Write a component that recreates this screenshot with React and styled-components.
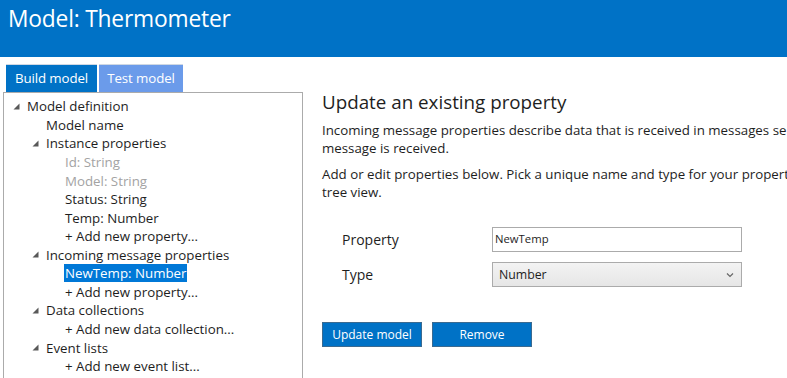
import React from "react";
import styled, { createGlobalStyle } from "styled-components";

const Global = createGlobalStyle`
  html, body { margin: 0; padding: 0; background: #fff; overflow: hidden; }
  body { font-family: "Open Sans", "Noto Sans", sans-serif; color: #1e1e1e; }
  * { box-sizing: border-box; }
`;

const Page = styled.div`
  width: 787px;
  height: 378px;
  overflow: hidden;
  display: flex;
  flex-direction: column;
`;

const Header = styled.header`
  height: 57px;
  background: #0072c6;
  padding: 3px 0 0 8px;
  flex: none;
`;

const Title = styled.h1`
  margin: 0;
  font-weight: 400;
  font-size: 22.8px;
  color: #fff;
  letter-spacing: -0.2px;
`;

const Body = styled.div`
  display: flex;
  flex: 1;
  padding: 7px 0 0 3px;
  min-height: 0;
`;

const LeftCol = styled.div`
  width: 300px;
  flex: none;
  display: flex;
  flex-direction: column;
`;

const Tabs = styled.div`
  display: flex;
  gap: 2px;
  padding-left: 3px;
`;

const Tab = styled.div`
  height: 28px;
  width: ${(p) => p.$w}px;
  padding: 0 0 1px 0;
  display: flex;
  align-items: center;
  justify-content: center;
  white-space: nowrap;
  border-top: 1px solid #cfd8e3;
  background: ${(p) => (p.$active ? "#0072c6" : "#6b9bea")};
  color: #fff;
  font-size: 13.3px;
  letter-spacing: -0.1px;
`;

const TreePanel = styled.div`
  flex: 1;
  border: 1px solid #ababab;
  border-bottom: none;
  padding-top: 4px;
`;

const Row = styled.div`
  height: 18.57px;
  display: flex;
  align-items: center;
  padding-left: ${(p) => 8 + p.$level * 19}px;
  font-size: 13.3px;
  color: ${(p) => (p.$muted ? "#a3a3a3" : "#1e1e1e")};
`;

const Toggle = styled.span`
  width: 15px;
  flex: none;
  display: flex;
  align-items: center;
  padding-left: 1px;
`;

const Label = styled.span`
  line-height: 18px;
  padding: 0 1px;
  margin-left: -1px;
  background: ${(p) => (p.$selected ? "#0078d7" : "transparent")};
  color: ${(p) => (p.$selected ? "#fff" : "inherit")};
  white-space: nowrap;
`;

const Right = styled.main`
  padding: 25px 0 0 19px;
  width: 620px;
  flex: none;
`;

const Heading = styled.h2`
  margin: 0;
  font-weight: 400;
  font-size: 18.8px;
  line-height: 26px;
`;

const Para = styled.p`
  margin: 7px 0 0;
  font-size: 13.3px;
  line-height: 17.5px;
  white-space: nowrap;
  & + & {
    margin-top: 9px;
  }
`;

const Form = styled.div`
  display: grid;
  grid-template-columns: 150px 250px;
  row-gap: 10px;
  margin: 26px 0 0 20px;
  align-items: center;
`;

const FieldLabel = styled.span`
  font-size: 14px;
`;

const Input = styled.div`
  height: 25px;
  border: 1px solid #ababab;
  font-size: 11.3px;
  padding: 3px 0 0 2px;
`;

const Select = styled.div`
  height: 25px;
  border: 1px solid #ababab;
  background: linear-gradient(#f3f3f3, #e6e6e6);
  font-size: 12.3px;
  display: flex;
  align-items: center;
  justify-content: space-between;
  padding: 0 7px 0 6px;
`;

const Buttons = styled.div`
  display: flex;
  gap: 10px;
  margin-top: 35px;
`;

const Button = styled.button`
  width: 100px;
  height: 25px;
  background: #0072c6;
  border: 1px solid #3b6a90;
  color: #fff;
  font-family: inherit;
  font-size: 12px;
  padding: 0;
`;

const Tri = () => (
  <svg width="7" height="7" viewBox="0 0 7 7">
    <polygon points="6.5,0.5 6.5,6.5 0.5,6.5" fill="#595959" />
  </svg>
);

const Chevron = () => (
  <svg width="8" height="6" viewBox="0 0 8 6">
    <polyline points="1,1.5 4,4.5 7,1.5" fill="none" stroke="#666" strokeWidth="1.2" />
  </svg>
);

const tree = [
  { t: "Model definition", l: 0, e: true },
  { t: "Model name", l: 1 },
  { t: "Instance properties", l: 1, e: true },
  { t: "Id: String", l: 2, m: true },
  { t: "Model: String", l: 2, m: true },
  { t: "Status: String", l: 2 },
  { t: "Temp: Number", l: 2 },
  { t: "+ Add new property...", l: 2 },
  { t: "Incoming message properties", l: 1, e: true },
  { t: "NewTemp: Number", l: 2, s: true },
  { t: "+ Add new property...", l: 2 },
  { t: "Data collections", l: 1, e: true },
  { t: "+ Add new data collection...", l: 2 },
  { t: "Event lists", l: 1, e: true },
  { t: "+ Add new event list...", l: 2 },
];

export default function App() {
  return (
    <Page>
      <Global />
      <Header>
        <Title>Model: Thermometer</Title>
      </Header>
      <Body>
        <LeftCol>
          <Tabs>
            <Tab $active $w={91}>Build model</Tab>
            <Tab $w={84}>Test model</Tab>
          </Tabs>
          <TreePanel>
            {tree.map((r, i) => (
              <Row key={i} $level={r.l} $muted={r.m}>
                <Toggle>{r.e ? <Tri /> : null}</Toggle>
                <Label $selected={r.s}>{r.t}</Label>
              </Row>
            ))}
          </TreePanel>
        </LeftCol>
        <Right>
          <Heading>Update an existing property</Heading>
          <Para>
            Incoming message properties describe data that is received in messages sent by a device.
            <br />
            message is received.
          </Para>
          <Para>
            Add or edit properties below. Pick a unique name and type for your property, then select it in the
            <br />
            tree view.
          </Para>
          <Form>
            <FieldLabel>Property</FieldLabel>
            <Input>NewTemp</Input>
            <FieldLabel>Type</FieldLabel>
            <Select>
              <span>Number</span>
              <Chevron />
            </Select>
          </Form>
          <Buttons>
            <Button>Update model</Button>
            <Button>Remove</Button>
          </Buttons>
        </Right>
      </Body>
    </Page>
  );
}
